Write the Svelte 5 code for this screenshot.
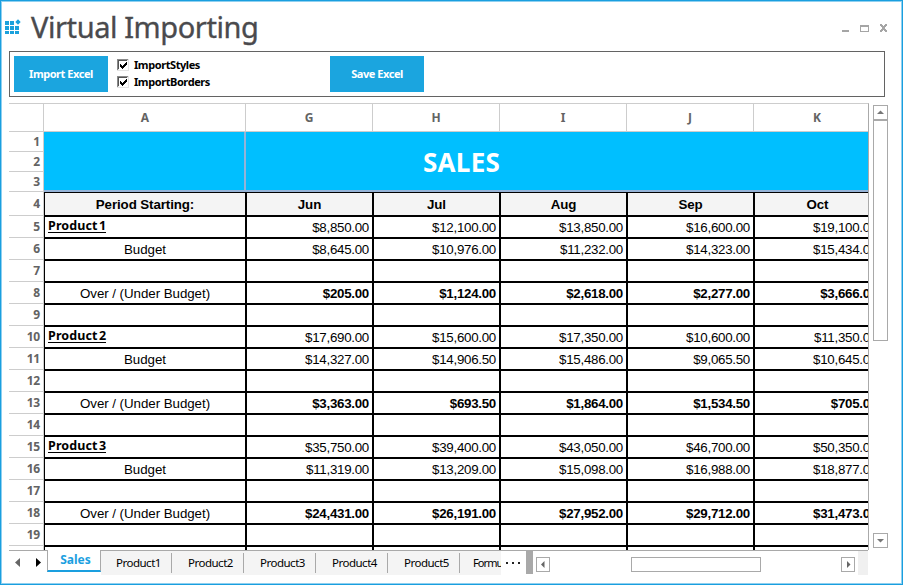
<script>
  const columns = ['G', 'H', 'I', 'J', 'K'];
  const months = ['Jun', 'Jul', 'Aug', 'Sep', 'Oct'];
  const blank = ['', '', '', '', ''];
  const over = 'Over / (Under Budget)';
  const rows = [
    { label: 'Product 1', kind: 'name', cells: ['$8,850.00', '$12,100.00', '$13,850.00', '$16,600.00', '$19,100.00'] },
    { label: 'Budget', cells: ['$8,645.00', '$10,976.00', '$11,232.00', '$14,323.00', '$15,434.00'] },
    { label: '', cells: blank },
    { label: over, kind: 'total', cells: ['$205.00', '$1,124.00', '$2,618.00', '$2,277.00', '$3,666.00'] },
    { label: '', cells: blank },
    { label: 'Product 2', kind: 'name', cells: ['$17,690.00', '$15,600.00', '$17,350.00', '$10,600.00', '$11,350.00'] },
    { label: 'Budget', cells: ['$14,327.00', '$14,906.50', '$15,486.00', '$9,065.50', '$10,645.00'] },
    { label: '', cells: blank },
    { label: over, kind: 'total', cells: ['$3,363.00', '$693.50', '$1,864.00', '$1,534.50', '$705.00'] },
    { label: '', cells: blank },
    { label: 'Product 3', kind: 'name', cells: ['$35,750.00', '$39,400.00', '$43,050.00', '$46,700.00', '$50,350.00'] },
    { label: 'Budget', cells: ['$11,319.00', '$13,209.00', '$15,098.00', '$16,988.00', '$18,877.00'] },
    { label: '', cells: blank },
    { label: over, kind: 'total', cells: ['$24,431.00', '$26,191.00', '$27,952.00', '$29,712.00', '$31,473.00'] },
    { label: '', cells: blank },
    { label: '', cells: blank }
  ];
  const numbers = Array.from({ length: 19 }, (_, i) => i + 1);
  const tabs = ['Product1', 'Product2', 'Product3', 'Product4', 'Product5', 'Formu'];
  let styles = $state(true);
  let borders = $state(true);
</script>

{#snippet check(label, on, toggle)}
  <button class="check" onclick={toggle}>
    <svg width="12" height="12" viewBox="0 0 12 12" shape-rendering="crispEdges">
      <rect width="12" height="12" fill="#e3e3e3" />
      <path d="M0 0H11V1H1V11H0Z" fill="#8a8a8a" />
      <path d="M1 1H10V2H2V10H1Z" fill="#555" />
      <rect x="2" y="2" width="9" height="9" fill="#fff" />
      {#if on}<path d="M3 5h1v1h1v1h1v-1h1v-1h1v-1h1v-1h1v3h-1v1h-1v1h-1v1h-1v1h-1v-1h-1v-1h-1z" fill="#000" />{/if}
    </svg>
    <span>{label}</span>
  </button>
{/snippet}

<main class="window">
  <header>
    <svg class="logo" width="16" height="16" viewBox="0 0 16 16" fill="#1ba1dc">
      <path d="M0 2h4v4H0zM5 2h4v4H5zM0 7h4v4H0zM5 7h4v4H5zM10 7h4v4h-4zM0 12h4v3H0zM5 12h4v3H5zM10 12h4v3h-4zM13 .3L15.7 3 13 5.7 10.3 3z" />
    </svg>
    <h1>Virtual Importing</h1>
    <svg class="controls" width="48" height="12" viewBox="0 0 48 12" fill="#a5a5a5" shape-rendering="crispEdges">
      <path d="M0 7h7v2H0z" />
      <path d="M18 2h9v7h-9zM19 4v4h7v-4z" fill-rule="evenodd" />
      <path d="M38 1h2v1h1v1h1v-1h1v-1h2v2h-1v1h-1v2h1v1h1v2h-2v-1h-1v-1h-1v1h-1v1h-2v-2h1v-1h1v-2h-1v-1h-1z" />
    </svg>
  </header>

  <section class="toolbar">
    <button class="action">Import Excel</button>
    <div class="checks">
      {@render check('ImportStyles', styles, () => (styles = !styles))}
      {@render check('ImportBorders', borders, () => (borders = !borders))}
    </div>
    <button class="action">Save Excel</button>
  </section>

  <section class="book">
    <div class="view">
      <div class="sheet">
        <div class="rowheads">
          <div class="corner"></div>
          {#each numbers as n}<div class="rh" class:band={n < 4} class:tall={n === 4}>{n}</div>{/each}
        </div>
        <div class="grid">
          <div class="line colheads">
            <div class="ch first">A</div>
            {#each columns as c}<div class="ch">{c}</div>{/each}
          </div>
          <div class="line banner">
            <div class="bannerleft"></div>
            <div class="bannertitle">SALES</div>
          </div>
          <div class="line months">
            <div class="cell first">Period Starting:</div>
            {#each months as m}<div class="cell">{m}</div>{/each}
          </div>
          {#each rows as row}
            <div class="line data {row.kind ?? ''}">
              <div class="cell first"><span>{row.label}</span></div>
              {#each row.cells as value}<div class="cell">{value}</div>{/each}
            </div>
          {/each}
        </div>
      </div>
      <div class="vscroll">
        <div class="sbtn"><svg width="13" height="13"><path d="M3 8h7L6.500 4.500z" fill="#777" /></svg></div>
        <div class="vthumb"></div>
        <div class="sbtn bottom"><svg width="13" height="13"><path d="M3 5h7L6.500 8.500z" fill="#777" /></svg></div>
      </div>
    </div>

    <footer>
      <div class="arrows">
        <svg width="28" height="10"><path d="M5 0v9L0 4.500z" fill="#666" /><path d="M21 0v9l5-4.500z" fill="#000" /></svg>
      </div>
      <div class="active">Sales</div>
      <div class="tabs">
        {#each tabs as tab}<div class="tab"><span>{tab}</span></div>{/each}
      </div>
      <div class="more"><i></i><i></i><i></i></div>
      <div class="grip"></div>
      <div class="hscroll">
        <div class="hbtn"><svg width="12" height="13"><path d="M7.500 3v7L4 6.500z" fill="#666" /></svg></div>
        <div class="hthumb"></div>
        <div class="hbtn"><svg width="12" height="13"><path d="M5 3v7l3.500-3.500z" fill="#666" /></svg></div>
      </div>
      <div class="filler"></div>
    </footer>
  </section>
</main>

<style>
  :global(body) { background: #fff; overflow: hidden; }
  * { box-sizing: border-box; }
  .window {
    width: 903px; height: 585px; border: 1px solid #1a9fdf;
    box-shadow: inset 0 0 0 1px #8fd0f0; background: #fff; padding: 0 0 0 8px; color: #000;
    font-family: 'Noto Sans', 'Open Sans', sans-serif; font-size: 12px; overflow: hidden;
  }
  button { border: 0; background: none; padding: 0; margin: 0; font: inherit; color: inherit; }
  header { height: 50px; display: flex; align-items: flex-start; }
  .logo { margin: 18px 0 0 -4px; }
  h1 { margin: 5px 0 0 10px; font-size: 29px; line-height: 42px; font-weight: 400; color: #4a4a4d; letter-spacing: -.42px; white-space: nowrap; -webkit-text-stroke: .35px #4a4a4d; }
  .controls { margin: 22px 12px 0 auto; }
  .toolbar { width: 876px; height: 46px; border: 1px solid #636363; display: flex; align-items: flex-start; padding: 4px; }
  .action { width: 94px; height: 36px; background: #1ba5df; color: #fff; font-weight: 700; font-size: 11px; letter-spacing: -.45px; padding-bottom: 2px; }
  .checks { width: 222px; padding-left: 9px; }
  .check { display: flex; align-items: center; height: 17px; gap: 5px; font-weight: 700; font-size: 11px; letter-spacing: -.42px; }
  .book { margin-top: 6px; width: 885px; }
  .view { display: flex; height: 447px; }
  .sheet { width: 860px; height: 447px; display: flex; overflow: hidden; border-top: 1px solid #cdcdcd; border-right: 1px solid #aaa; }
  .rowheads { width: 35px; flex: none; border-right: 1px solid #cdcdcd; }
  .corner { height: 28px; border-bottom: 1px solid #cdcdcd; }
  .rh { height: 22px; border-bottom: 1px solid #cdcdcd; text-align: right; padding-right: 3px; line-height: 21px; font-weight: 700; color: #636363; letter-spacing: -.2px; }
  .rh.band { height: 20px; line-height: 20px; }
  .rh.tall { height: 24px; line-height: 24px; }
  .grid { flex: none; width: 838px; }
  .line { display: flex; }
  .ch { width: 127px; height: 28px; border-right: 1px solid #cdcdcd; border-bottom: 1px solid #cdcdcd; text-align: center; line-height: 27px; font-weight: 700; color: #636363; }
  .ch.first { width: 202px; padding-left: 1px; }
  .banner { height: 60px; background: #00bfff; border-bottom: 2px solid #95b3d7; }
  .bannerleft { width: 202px; border-right: 2px solid #95b3d7; }
  .bannertitle { flex: 1; padding-right: 205px; text-align: center; color: #fff; font-size: 26px; font-weight: 700; line-height: 60px; letter-spacing: .3px; }
  .cell { flex: none; width: 127px; height: 22px; border-right: 2px solid #000; border-bottom: 2px solid #000; line-height: 21px; padding-right: 3px; text-align: right; white-space: nowrap; font-family: 'Liberation Sans', Arial, sans-serif; font-size: 13.33px; letter-spacing: -.28px; }
  .cell.first { width: 203px; border-left: 1px solid #000; padding: 0; text-align: center; letter-spacing: -.05px; }
  .months .cell { height: 25px; border-top: 1px solid #000; background: #f4f4f4; text-align: center; font-weight: 700; line-height: 23px; padding-right: 0; letter-spacing: -.1px; }
  .total .cell:not(.first) { font-weight: 700; }
  .name .cell.first { font-family: 'Noto Sans', sans-serif; font-weight: 700; text-align: left; padding-left: 3px; font-size: 12.5px; line-height: 17px; letter-spacing: .12px; }
  .name .first span { display: inline-block; border-bottom: 1px solid #000; height: 16px; line-height: 17px; word-spacing: -2px; }
  .vscroll { width: 15px; height: 445px; margin-left: 4px; padding-top: 2px; display: flex; flex-direction: column; }
  .sbtn { width: 15px; height: 15px; border: 1px solid #a9a9a9; flex: none; }
  .sbtn svg, .hbtn svg { display: block; }
  .vthumb { height: 221px; border: 1px solid #a9a9a9; }
  .sbtn.bottom { margin-top: auto; }
  footer { height: 24px; display: flex; width: 859px; border-top: 1px solid #a9a9a9; }
  .arrows { width: 38px; padding: 7px 0 0 6px; }
  .arrows svg { display: block; }
  .active { width: 54px; height: 22px; margin-top: -1px; background: #fff; border: solid #a9a9a9; border-width: 0 1px; border-bottom: 2px solid #1a9fdf; color: #1a9fdf; font-weight: 700; text-align: center; line-height: 20px; padding-left: 3px; }
  .tabs { display: flex; width: 400px; height: 24px; overflow: hidden; background: #f4f4f4; }
  .tab { flex: none; width: 72px; height: 22px; padding-top: 2px; }
  .tab:first-child { width: 71px; }
  .tab:last-child { width: 41px; }
  .tab span { display: block; height: 20px; line-height: 20px; border-right: 1px solid #a9a9a9; padding-left: 15px; font-size: 11.5px; letter-spacing: -.5px; }
  .tab:not(:first-child) span { padding-left: 16px; }
  .tab:last-child span { border-right: 0; padding-left: 13px; font-size: 11px; letter-spacing: -.9px; }
  .more { width: 25px; display: flex; gap: 4px; padding: 11px 0 0 5px; }
  .more i { width: 2px; height: 2px; background: #222; }
  .grip { width: 7px; height: 23px; background: #a9a9a9; }
  .hscroll { width: 325px; display: flex; padding: 6px 0 0 3px; }
  .hbtn { width: 14px; height: 15px; border: 1px solid #a9a9a9; flex: none; }
  .hthumb { width: 130px; height: 15px; border: 1px solid #a9a9a9; margin: 0 80px 0 81px; flex: none; }
  .filler { width: 10px; height: 24px; background: #f0f0f0; }
</style>
